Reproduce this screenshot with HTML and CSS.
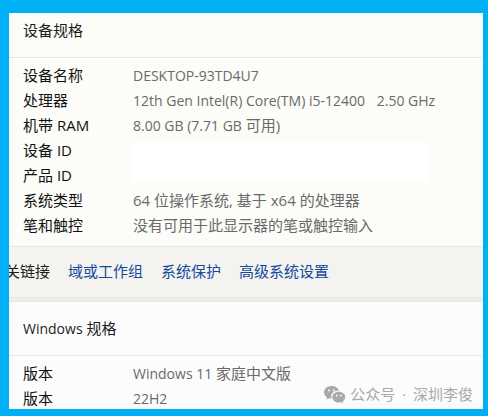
FILE: index.html
```html
<!DOCTYPE html>
<html lang="zh-CN">
<head>
<meta charset="utf-8">
<title>设备规格</title>
<link rel="stylesheet" href="styles.css">
</head>
<body>
<main class="panel">
  <section class="card">
    <h2 class="card-title">设备规格</h2>
    <dl class="specs">
      <dt>设备名称</dt><dd><span class="latin">DESKTOP-93TD4U7</span></dd>
      <dt>处理器</dt><dd class="preserve"><span class="latin">12th Gen Intel(R) Core(TM) i5-12400</span>   <span class="latin">2.50 GHz</span></dd>
      <dt>机带 RAM</dt><dd><span class="latin">8.00 GB (7.71 GB</span> 可用)</dd>
      <dt>设备 ID</dt><dd class="redacted"></dd>
      <dt>产品 ID</dt>
      <dt>系统类型</dt><dd>64 位操作系统, 基于 x64 的处理器</dd>
      <dt>笔和触控</dt><dd>没有可用于此显示器的笔或触控输入</dd>
    </dl>
  </section>
  <nav class="links">
    <span class="links-label">关链接</span>
    <a href="#domain">域或工作组</a>
    <a href="#protection">系统保护</a>
    <a href="#advanced">高级系统设置</a>
  </nav>
  <section class="card card-windows">
    <h2 class="card-title card-title-tall"><span class="latin">Windows</span> 规格</h2>
    <dl class="specs">
      <dt>版本</dt><dd><span class="latin">Windows 11</span> 家庭中文版</dd>
      <dt>版本</dt><dd><span class="latin">22H2</span></dd>
    </dl>
  </section>
  <div class="watermark">
    <svg class="watermark-icon" viewBox="0 0 22 18" aria-hidden="true">
      <path fill="#a9a9a9" d="M7.5 0C3.4 0 0 2.800 0 6.300C0 8.300 1.100 10 2.900 11.200L2.200 13.600L4.900 12.200C5.800 12.500 6.800 12.600 7.800 12.600A6.500 5.600 0 0 1 14.900 4.800C14.200 2 11.200 0 7.500 0Z"/>
      <path fill="#a9a9a9" d="M14.800 5.800C11.200 5.800 8.400 8.200 8.400 11.200C8.400 14.200 11.200 16.600 14.800 16.600C15.600 16.600 16.400 16.500 17.100 16.200L19.300 17.400L18.700 15.400C20.200 14.400 21.200 12.900 21.200 11.200C21.200 8.200 18.400 5.800 14.800 5.800Z"/>
      <g fill="#fafafa">
        <circle cx="5" cy="4.400" r="1"/><circle cx="10" cy="4.400" r="1"/>
        <circle cx="12.700" cy="9.500" r=".9"/><circle cx="16.900" cy="9.500" r=".9"/>
      </g>
    </svg>
    <span>公众号 <span class="dot">·</span> 深圳李俊</span>
  </div>
</main>
</body>
</html>
```
FILE: styles.css
```css
* {
  box-sizing: border-box;
}

body {
  margin: 0;
  padding: 13px 5px 7px 9px;
  min-height: 100vh;
  display: flex;
  background: #00b0f4;
  color: #1c1c1c;
  font-family: "Open Sans", "Noto Sans CJK SC", sans-serif;
  font-size: 15px;
  line-height: 25px;
}

.panel {
  position: relative;
  flex: 1;
  min-width: 0;
  display: flex;
  flex-direction: column;
  overflow: hidden;
  background: #fcfcfc;
}

.card {
  background: #fcfcf9;
}

.card-windows {
  flex: 1;
  background: #fcfcfc;
}

.card-title {
  margin: 0;
  padding: 5px 14px 14px;
  border-bottom: 1px solid #e8e6e0;
  font-size: 15px;
  font-weight: 400;
}

.card-title-tall {
  padding: 14px 14px 14px;
  border-bottom-color: #e6e6e6;
}

.latin {
  font-size: 14px;
}

.specs {
  display: grid;
  grid-template-columns: 110px 1fr;
  grid-auto-rows: 25px;
  margin: 0;
  padding: 5px 14px 8px;
}

.card-windows .specs {
  margin-bottom: -2px;
  padding-bottom: 0;
}

.specs dt {
  grid-column: 1;
  color: #111;
}

.specs dd {
  grid-column: 2;
  margin: 0;
  color: #6a6a6a;
  white-space: nowrap;
}

.specs .preserve {
  white-space: pre;
}

.specs .redacted {
  grid-row: 4 / span 2;
  width: 296px;
  margin: 4px 0 6px -1px;
  background: #fff;
}

.links {
  display: flex;
  gap: 18px;
  padding: 12px 0 13px;
  border-top: 1px solid #e6e6e3;
  border-bottom: 5px double #e9e9e7;
  background: #f4f3f0;
  white-space: nowrap;
}

.links-label {
  margin-left: -4px;
}

.links a {
  color: #134a9c;
  text-decoration: none;
}

.watermark {
  position: absolute;
  right: 10px;
  bottom: 2px;
  display: flex;
  align-items: center;
  gap: 4px;
  color: #a9a9a9;
}

.watermark .dot {
  padding: 0 3px;
}

.watermark-icon {
  width: 22px;
  height: 18px;
}
```
